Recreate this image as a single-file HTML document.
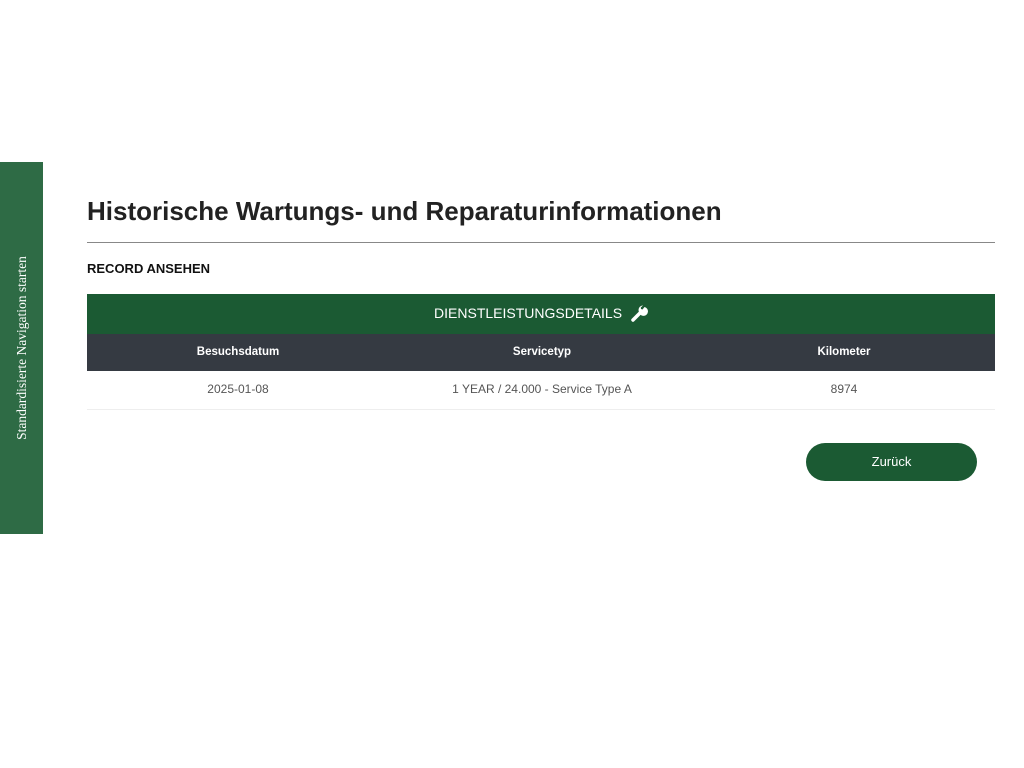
<!DOCTYPE html>
<html><head><style>
body{margin:0;width:1024px;height:768px;background:#fff;font-family:"Liberation Sans",sans-serif;position:relative;overflow:hidden}
.side{position:absolute;left:0;top:162px;width:43px;height:372px;background:#2e6b45}
.side span{position:absolute;left:50%;top:50%;transform:translate(-50%,-50%) rotate(-90deg);white-space:nowrap;color:#fff;font-family:"Liberation Serif",serif;font-size:13.5px}
h1{position:absolute;left:87px;top:196px;margin:0;font-size:26px;font-weight:bold;color:#222}
.hr{position:absolute;left:87px;top:242px;width:908px;height:1px;background:#888}
.rec{position:absolute;left:87px;top:261px;font-size:13px;font-weight:bold;color:#111}
.gh{position:absolute;left:87px;top:294px;width:908px;height:40px;background:#1b5a33;color:#fff;font-size:14px;text-align:center;line-height:38px}
.th{position:absolute;left:87px;top:334px;width:908px;height:37px;background:#353a42;color:#fff;font-size:11.5px;font-weight:bold}
.row{position:absolute;left:87px;top:371px;width:908px;height:38px;border-bottom:1px solid #eee;color:#555;font-size:12px}
.c{position:absolute;top:0;line-height:37px;transform:translateX(-50%)}
.btn{position:absolute;left:806px;top:443px;width:171px;height:38px;border-radius:19px;background:#1b5a33;color:#fff;font-size:13px;text-align:center;line-height:38px}
</style></head><body>
<div class="side"><span>Standardisierte Navigation starten</span></div>
<h1>Historische Wartungs- und Reparaturinformationen</h1>
<div class="hr"></div>
<div class="rec">RECORD ANSEHEN</div>
<div class="gh">DIENSTLEISTUNGSDETAILS <svg width="18" height="18" viewBox="0 0 18 18" style="vertical-align:-4px;margin-left:4px"><path d="M3 16 L10 9" stroke="#fff" stroke-width="3.5" stroke-linecap="round"/><path d="M9 8 A4.5 4.5 0 1 0 14.5 3 L12.5 5.5 L11 5 L10.8 3.5 L13 1.5 A4.5 4.5 0 0 0 9 8Z" fill="#fff"/></svg></div>
<div class="th"><div class="c" style="left:151px">Besuchsdatum</div><div class="c" style="left:455px">Servicetyp</div><div class="c" style="left:757px">Kilometer</div></div>
<div class="row"><div class="c" style="left:151px">2025-01-08</div><div class="c" style="left:455px;white-space:nowrap">1 YEAR / 24.000 - Service Type A</div><div class="c" style="left:757px">8974</div></div>
<div class="btn">Zurück</div>
</body></html>
